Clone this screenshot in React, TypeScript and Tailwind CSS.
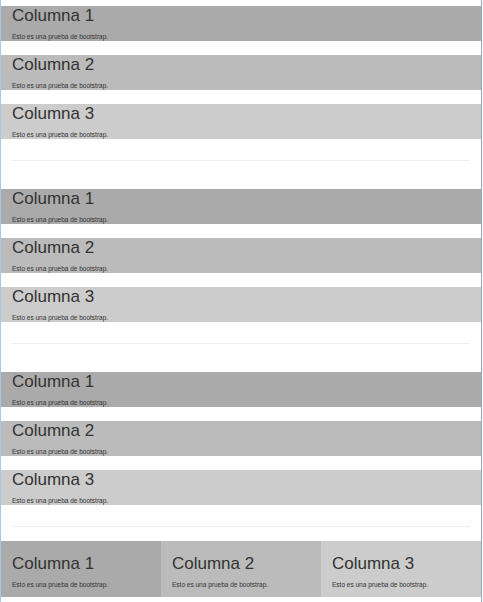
import React from "react";

const font = { fontFamily: '"Liberation Sans", Arial, sans-serif' };

function Bar({ bg, n }: { bg: string; n: number }) {
  return (
    <div className={`${bg} h-[35px] pl-[11px]`}>
      <h3 className="text-[17px] leading-[20px] text-[#333] font-normal">Columna {n}</h3>
      <p className="mt-[7px] text-[6.5px] leading-[8px] text-[#333]">Esto es una prueba de bootstrap.</p>
    </div>
  );
}

function Section() {
  return (
    <div className="flex flex-col">
      <div className="flex flex-col gap-[14px]">
        <Bar bg="bg-[#aaaaaa]" n={1} />
        <Bar bg="bg-[#bbbbbb]" n={2} />
        <Bar bg="bg-[#cccccc]" n={3} />
      </div>
      <div className="mx-[11px] mt-[21px] h-px bg-[#eeeeee] w-[458px]" />
    </div>
  );
}

function Col({ bg, n }: { bg: string; n: number }) {
  return (
    <div className={`${bg} flex-1 h-[56px] pl-[11px] pt-[13px]`}>
      <h3 className="text-[17px] leading-[20px] text-[#333] font-normal">Columna {n}</h3>
      <p className="mt-[7px] text-[6.5px] leading-[8px] text-[#333]">Esto es una prueba de bootstrap.</p>
    </div>
  );
}

export default function App() {
  return (
    <div className="w-[483px] h-[602px] bg-white overflow-hidden" style={font}>
      <div className="w-[482px] h-[602px] border-l border-l-[#aac6e6] border-r border-r-[#8ea9c6] pt-[6px] flex flex-col">
        <div className="flex flex-col gap-[28px]">
          <Section />
          <Section />
          <Section />
        </div>
        <div className="mt-[14px] flex">
          <Col bg="bg-[#aaaaaa]" n={1} />
          <Col bg="bg-[#bbbbbb]" n={2} />
          <Col bg="bg-[#cccccc]" n={3} />
        </div>
      </div>
    </div>
  );
}
